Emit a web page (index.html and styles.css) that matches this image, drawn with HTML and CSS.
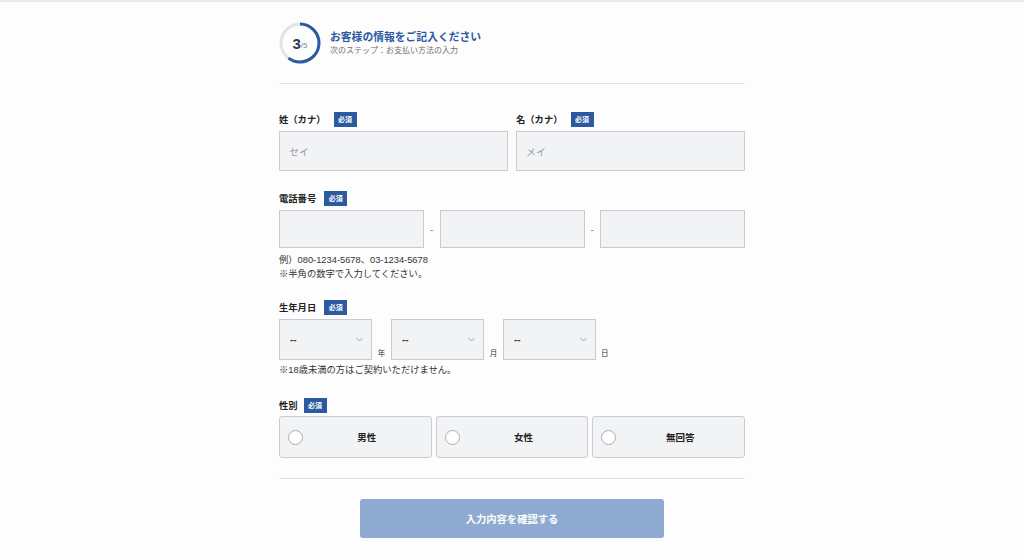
FILE: index.html
```html
<!DOCTYPE html>
<html lang="ja">
<head>
<meta charset="utf-8">
<title>お客様の情報</title>
<link rel="stylesheet" href="styles.css">
</head>
<body>
<div class="topline"></div>
<main class="form">
  <header class="step">
    <div class="progress">
      <svg width="42" height="42" viewBox="0 0 42 42">
        <circle cx="21" cy="21" r="19" fill="none" stroke="#e4e4e4" stroke-width="3"/>
        <circle cx="21" cy="21" r="19" fill="none" stroke="#2c5aa0" stroke-width="3" stroke-dasharray="71.63 119.38" transform="rotate(-90 21 21)"/>
      </svg>
      <div class="progress-num"><span class="cur">3</span><span class="tot">/5</span></div>
    </div>
    <div class="step-text">
      <div class="step-title">お客様の情報をご記入ください</div>
      <div class="step-sub">次のステップ：お支払い方法の入力</div>
    </div>
  </header>

  <section class="row two">
    <div class="field">
      <div class="label">姓（カナ）<span class="req">必須</span></div>
      <div class="input"><span class="ph">セイ</span></div>
    </div>
    <div class="field">
      <div class="label">名（カナ）<span class="req">必須</span></div>
      <div class="input"><span class="ph">メイ</span></div>
    </div>
  </section>

  <section class="field block">
    <div class="label">電話番号<span class="req">必須</span></div>
    <div class="phone">
      <div class="input short"></div>
      <span class="dash">-</span>
      <div class="input short"></div>
      <span class="dash">-</span>
      <div class="input short"></div>
    </div>
    <p class="help">例）080-1234-5678、03-1234-5678<br>※半角の数字で入力してください。</p>
  </section>

  <section class="field block dob-block">
    <div class="label">生年月日<span class="req">必須</span></div>
    <div class="dob">
      <div class="select"><span>--</span><svg width="7" height="5" viewBox="0 0 7 5"><path d="M0.5 1 L3.5 4 L6.5 1" fill="none" stroke="#8a94a6" stroke-width="0.9"/></svg></div>
      <span class="unit">年</span>
      <div class="select"><span>--</span><svg width="7" height="5" viewBox="0 0 7 5"><path d="M0.5 1 L3.5 4 L6.5 1" fill="none" stroke="#8a94a6" stroke-width="0.9"/></svg></div>
      <span class="unit">月</span>
      <div class="select"><span>--</span><svg width="7" height="5" viewBox="0 0 7 5"><path d="M0.5 1 L3.5 4 L6.5 1" fill="none" stroke="#8a94a6" stroke-width="0.9"/></svg></div>
      <span class="unit">日</span>
    </div>
    <p class="help">※18歳未満の方はご契約いただけません。</p>
  </section>

  <section class="field block gender">
    <div class="label">性別<span class="req">必須</span></div>
    <div class="radios">
      <div class="radio"><span class="dot"></span><span class="rtext">男性</span></div>
      <div class="radio"><span class="dot"></span><span class="rtext">女性</span></div>
      <div class="radio"><span class="dot"></span><span class="rtext">無回答</span></div>
    </div>
  </section>

  <div class="actions">
    <button class="submit" type="button">入力内容を確認する</button>
  </div>
</main>
</body>
</html>
```
FILE: styles.css
```css
* { box-sizing: border-box; }
html, body { margin: 0; padding: 0; }
body {
  background: #fdfdfd;
  font-family: "Liberation Sans", "Noto Sans CJK JP", sans-serif;
  color: #2b2b2b;
}
.topline { height: 2px; background: #e8e8e8; }
.form { width: 466px; margin: 0 auto; padding-top: 20px; }

.step {
  display: flex;
  align-items: center;
  gap: 9px;
  padding-bottom: 19px;
  border-bottom: 1px solid #e3e3e3;
}
.progress { position: relative; width: 42px; height: 42px; }
.progress svg { display: block; }
.progress-num {
  position: absolute; inset: 0;
  display: flex; align-items: center; justify-content: center;
  padding-top: 1px;
}
.cur { font-size: 15px; font-weight: bold; color: #2a3b57; }
.tot { font-size: 8px; color: #8a8a8a; margin-top: 3px; }
.step-title { font-size: 10.8px; font-weight: bold; color: #2c5aa0; line-height: 14px; }
.step-sub { font-size: 8px; color: #707070; line-height: 12px; margin-top: 1px; }

.row.two { display: flex; gap: 8px; margin-top: 27px; }
.row.two .field { flex: 1; }

.label {
  display: flex; align-items: center;
  font-size: 9.3px; font-weight: bold; color: #222;
  height: 16px; margin-bottom: 4px;
}
.req {
  display: inline-flex; align-items: center; justify-content: center;
  width: 23px; height: 15px; margin-left: 8px;
  background: #2c5aa0; color: #fff;
  font-size: 7px; font-weight: bold;
}
.input {
  height: 40px;
  background: #f2f3f5;
  border: 1px solid #c8ccd2;
  display: flex; align-items: center;
  padding-left: 9px;
}
.ph { font-size: 10px; color: #9a9ea6; }

.block { margin-top: 19px; }
.phone { display: flex; align-items: center; }
.input.short { width: 145px; height: 38px; }
.dash { flex: 1; text-align: center; font-size: 10px; color: #888; }
.help { margin: 5px 0 0; font-size: 9.3px; line-height: 14px; color: #333; }

.dob-block { margin-top: 18px; }
.dob-block .help { margin-top: 3px; }
.dob { display: flex; align-items: flex-end; }
.select {
  width: 93px; height: 41px;
  background: #f2f3f5; border: 1px solid #c8ccd2;
  display: flex; align-items: center; justify-content: space-between;
  padding: 0 8px 0 10px;
  font-size: 10px; font-weight: bold; color: #444;
}
.unit { width: 19px; text-align: center; font-size: 7.5px; color: #333; line-height: 10px; padding-bottom: 1px; }
.dob .unit:last-child { text-align: left; padding-left: 5px; }

.block.gender { margin-top: 20px; }
.gender .label { margin-bottom: 3px; }
.gender .req { margin-left: 6px; }
.radios { display: flex; gap: 4px; }
.radio {
  flex: 1; height: 42px;
  background: #f2f3f5; border: 1px solid #c8ccd2; border-radius: 3px;
  display: flex; align-items: center; padding-left: 8px;
}
.dot {
  width: 15px; height: 15px; border-radius: 50%;
  background: #fff; border: 1px solid #a9adb4;
}
.rtext { flex: 1; text-align: center; font-size: 9.5px; font-weight: bold; color: #222; }

.actions {
  margin-top: 20px; padding-top: 20px;
  border-top: 1px solid #e3e3e3;
  display: flex; justify-content: center;
}
.submit {
  width: 304px; height: 39px;
  background: #8eaad0; border: none; border-radius: 3px;
  color: #fff; font-family: inherit;
  font-size: 10.3px; font-weight: bold;
}
```
